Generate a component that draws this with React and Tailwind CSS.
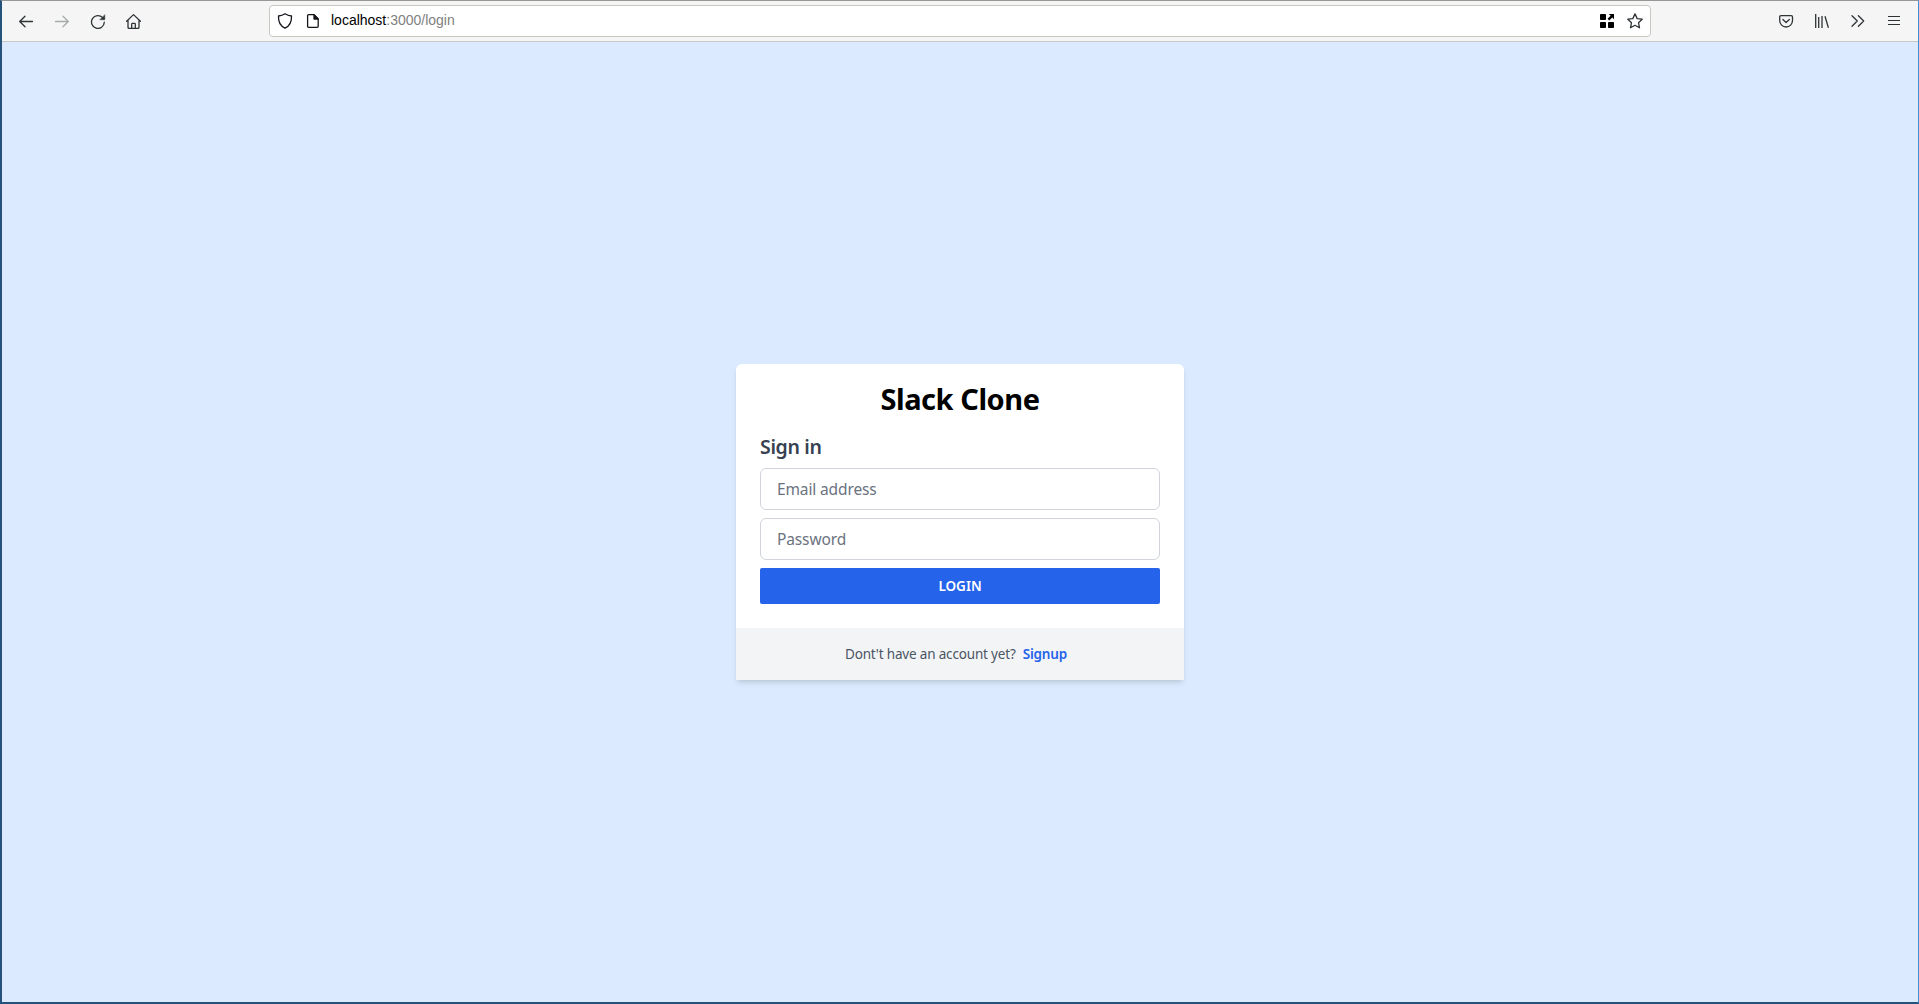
function Icon({ children, className = "text-[#2e3436]", ...props }) {
  return (
    <svg
      viewBox="0 0 16 16"
      fill="none"
      stroke="currentColor"
      strokeWidth="1.3"
      strokeLinecap="round"
      strokeLinejoin="round"
      className={`size-4 shrink-0 ${className}`}
      {...props}
    >
      {children}
    </svg>
  );
}

function Toolbar() {
  return (
    <header className="flex h-[41px] shrink-0 items-center border-b border-[#c8c8c4] bg-[#f5f5f5] px-4">
      <nav className="flex items-center gap-5">
        <Icon>
          <path d="M14.500 8.500H1.700M7 3.200 1.700 8.500 7 13.800" />
        </Icon>
        <Icon className="text-[#a9abab]">
          <path d="M1.500 8.500h12.800M9 3.200l5.300 5.300L9 13.800" />
        </Icon>
        <Icon>
          <path d="M14.300 9.200A6.400 6.400 0 1 1 12.600 4.600" />
          <path d="M14.800 2v4.700h-4.700z" fill="currentColor" strokeWidth="0.5" />
        </Icon>
        <Icon>
          <path d="M.6 8.300 7.500 1.600l6.900 6.700M2 7.200v7.100c0 .7.400 1.100 1.100 1.100h8.800c.7 0 1.100-.4 1.100-1.100V7.200" />
          <path d="M5.700 15.200v-4.100c0-.5.3-.8.8-.8h2c.5 0 .8.300.8.800v4.100" />
        </Icon>
      </nav>

      <div className="mx-[127px] flex h-8 flex-1 items-center rounded border border-[#c8c7c0] bg-white px-[7px]">
        <Icon className="text-[#15141a]">
          <path d="M8 .8c1.900 1.300 4 2 6.500 2.200.3 5.600-1.600 9.800-6.500 12.200C3.100 12.800 1.200 8.600 1.500 3 4 2.800 6.100 2.100 8 .8z" />
        </Icon>
        <Icon className="ml-3 text-[#15141a]">
          <path d="M3.700 1.700H9L13.200 6v7.300c0 .7-.4 1.100-1.100 1.100H3.700c-.7 0-1.100-.4-1.100-1.100V2.800c0-.7.400-1.100 1.100-1.100z" />
          <path d="M9 1.700V6h4.200z" fill="currentColor" />
        </Icon>
        <p className="ml-2.5 flex-1 pb-0.5 font-['Liberation_Sans',sans-serif] text-sm leading-5 text-[#7f7f7f]">
          <span className="text-black">localhost</span>:3000/login
        </p>
        <Icon className="text-black" stroke="none" fill="currentColor">
          <rect x="1" y="1" width="6" height="6" rx="0.8" />
          <rect x="1" y="9" width="6" height="6" rx="0.8" />
          <rect x="9" y="9" width="6" height="6" rx="0.8" />
          <path d="M9.800 1H15v5.200l-1.800-1.800L10.200 7.400 8.600 5.800l3-3z" />
        </Icon>
        <Icon className="ml-3 text-[#2e3436]">
          <path d="m8 .9 2.200 4.700 5 .6-3.700 3.500 1 5.100L8 12.300l-4.500 2.500 1-5.100L.8 6.200l5-.6z" />
        </Icon>
      </div>

      <nav className="flex items-center gap-5">
        <Icon>
          <path d="M3 2.600h10.200c.8 0 1.300.5 1.300 1.300v3.700a6.400 6.400 0 0 1-12.800 0V3.900c0-.8.500-1.300 1.300-1.300z" />
          <path d="m4.900 6.500 3.200 3 3.200-3" />
        </Icon>
        <Icon strokeLinecap="butt">
          <path d="M1.700 1v14M4.700 4v11M8 3v12M11 3.200l3.400 11.600" />
        </Icon>
        <Icon>
          <path d="M2 2.700 7.300 8 2 13.300M8.400 2.700 13.700 8l-5.300 5.300" />
        </Icon>
        <Icon strokeLinecap="butt">
          <path d="M2 3.500h12M2 7.500h12M2 11.500h12" strokeWidth="1.100" />
        </Icon>
      </nav>
    </header>
  );
}

const field =
  "block h-[42px] w-full rounded-md border border-[#d1d5db] bg-white px-4 text-[15.5px] leading-6 tracking-[-0.13px] placeholder:text-[#6b7280] placeholder:opacity-100 focus:outline-none";

function LoginCard() {
  return (
    <main className="w-[448px] rounded-t-md bg-white shadow-md">
      <div className="px-6 pt-[17px] pb-6">
        <h1 className="text-center text-[29px] leading-9 font-[660] tracking-[-0.45px] text-black">
          Slack Clone
        </h1>
        <h2 className="mt-4 text-[19.5px] leading-7 font-semibold tracking-[-0.34px] text-[#374151]">
          Sign in
        </h2>
        <form className="mt-[7px] flex flex-col gap-2">
          <input type="email" placeholder="Email address" className={field} />
          <input type="password" placeholder="Password" className={field} />
          <button
            type="button"
            className="h-9 w-full rounded-xs bg-[#2563eb] text-[13.5px] leading-5 font-semibold text-white uppercase"
          >
            Login
          </button>
        </form>
      </div>
      <footer className="flex h-[52px] items-center justify-center bg-[#f3f4f6] text-[13.5px] leading-5 tracking-[-0.17px] text-[#4b5563]">
        <span>Dont't have an account yet?</span>
        <a className="mr-2 ml-[7px] font-semibold text-[#2563eb]">Signup</a>
      </footer>
    </main>
  );
}

export default function App() {
  return (
    <div className="flex h-screen flex-col border-t border-r border-b-2 border-l-2 border-t-[#979797] border-r-[#3f8fd2] border-b-[#24527a] border-l-[#24527a] bg-[#dbeafe] font-['Noto_Sans',sans-serif]">
      <Toolbar />
      <div className="flex flex-1 items-center justify-center">
        <LoginCard />
      </div>
    </div>
  );
}
